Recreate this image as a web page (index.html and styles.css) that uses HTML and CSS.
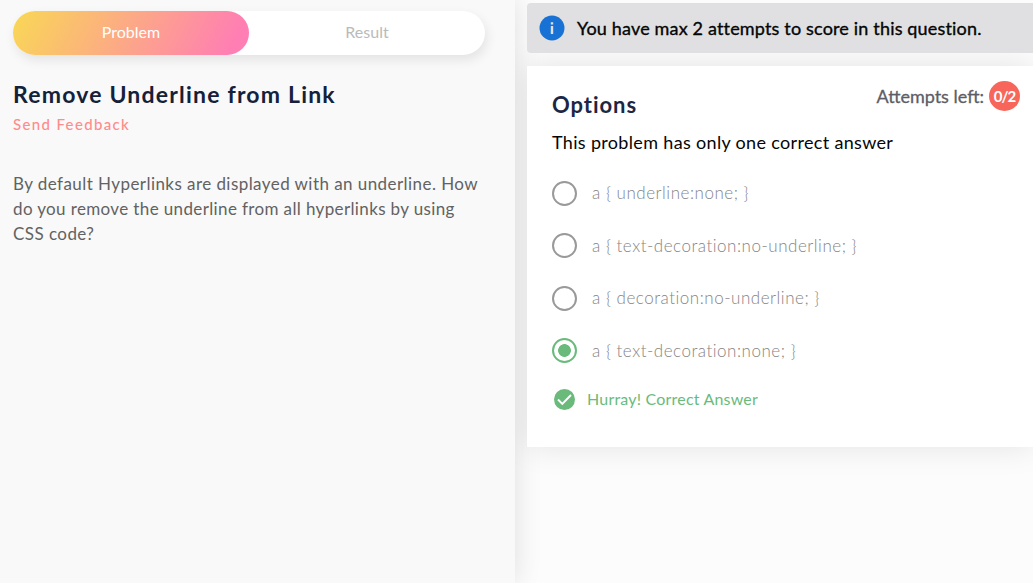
FILE: index.html
```html
<!DOCTYPE html>
<html lang="en">
<head>
<meta charset="utf-8">
<title>Remove Underline from Link</title>
<link rel="stylesheet" href="styles.css">
</head>
<body>
<div class="layout">
  <section class="problem">
    <nav class="tabs">
      <a class="tab tab-active">Problem</a>
      <a class="tab">Result</a>
    </nav>
    <h1 class="title">Remove Underline from Link</h1>
    <a class="feedback">Send Feedback</a>
    <p class="description">By default Hyperlinks are displayed with an underline. How<br><span class="line-tight">do you remove the underline from all hyperlinks by using</span><br>CSS code?</p>
  </section>
  <main class="answer">
    <div class="notice">
      <svg class="info" viewBox="0 0 26 26"><circle cx="13" cy="13" r="12.5" fill="#1871d4"/><path d="M11.8 7.2h2.4v2.2h-2.4zM11.8 11h2.4v8h-2.4z" fill="#e0e0e2"/></svg>
      <span class="notice-text">You have max 2 attempts to score in this question.</span>
    </div>
    <div class="card">
      <header class="card-head">
        <h2 class="options-title">Options</h2>
        <div class="attempts"><span class="attempts-label">Attempts left:</span><span class="badge">0/2</span></div>
      </header>
      <p class="hint">This problem has only one correct answer</p>
      <ul class="options">
        <li class="option"><span class="radio"></span><span class="option-text">a { underline:none; }</span></li>
        <li class="option"><span class="radio"></span><span class="option-text">a { text-decoration:no-underline; }</span></li>
        <li class="option"><span class="radio"></span><span class="option-text">a { decoration:no-underline; }</span></li>
        <li class="option"><span class="radio radio-checked"></span><span class="option-text">a { text-decoration:none; }</span></li>
      </ul>
      <div class="verdict">
        <svg class="tick" viewBox="0 0 21 21"><circle cx="10.5" cy="10.5" r="10.5" fill="#6abb7b"/><path d="M4 10.5l4.3 4.3L17 6" fill="none" stroke="#fff" stroke-width="1.9"/></svg>
        <span class="verdict-text">Hurray! Correct Answer</span>
      </div>
    </div>
  </main>
</div>
</body>
</html>
```
FILE: styles.css
```css
* { box-sizing: border-box; }
body, h1, h2, p, ul { margin: 0; padding: 0; }
body { font-family: Lato, "Open Sans", sans-serif; background: #fcfcfc; overflow: hidden; }
.layout { display: flex; height: 583px; }
.problem { width: 515px; padding: 11px 30px 0 13px; background: #f9f9f9; box-shadow: 0 0 26px rgba(0,0,0,.12); }
.tabs { display: flex; width: 472px; height: 44px; border-radius: 22px; background: #fff; box-shadow: 2px 5px 12px rgba(0,0,0,.09); }
.tab { flex: 1; border-radius: 22px; text-align: center; font-size: 16px; line-height: 42px; color: #bababa; }
.tab-active { color: #fff; background: linear-gradient(117deg, #f9d855 0%, #ff7eb3 92%); }
.title { margin-top: 24px; font-size: 23px; line-height: 30px; font-weight: 700; letter-spacing: 1.2px; color: #14213a; white-space: nowrap; }
.feedback { display: block; margin-top: 5px; font-size: 15px; line-height: 20px; letter-spacing: 1.35px; font-weight: 500; color: #ff8c8c; }
.description { margin-top: 37px; font-size: 17px; line-height: 25px; letter-spacing: .44px; color: #626262; white-space: nowrap; }
.line-tight { letter-spacing: .37px; }
.answer { flex: 1; padding: 3px 0 0 12px; min-width: 0; }
.notice { display: flex; align-items: center; gap: 12px; height: 50px; padding-left: 12px; border-radius: 4px 0 0 4px; background: #e0e0e2; position: relative; z-index: 2; }
.info { width: 26px; height: 26px; }
.notice-text { font-size: 18px; letter-spacing: .17px; color: #050505; -webkit-text-stroke: .35px #050505; white-space: nowrap; }
.card { height: 381px; margin-top: 13px; padding: 15px 13px 0 25px; background: #fff; box-shadow: 0 0 30px rgba(0,0,0,.1); }
.problem { position: relative; z-index: 1; }
.card { position: relative; z-index: 1; clip-path: inset(-40px -40px -40px -12px); }
.card-head { display: flex; justify-content: space-between; height: 46px; }
.options-title { padding-top: 9px; font-size: 22px; line-height: 30px; letter-spacing: .95px; color: #1c2746; }
.attempts { display: flex; gap: 5px; height: 30px; align-items: center; font-size: 18px; color: #5d5d66; -webkit-text-stroke: .3px #5d5d66; }
.attempts-label { padding-bottom: 1px; }
.badge { width: 31px; height: 30px; border-radius: 50%; background: #f8665b; color: #fff; font-size: 15px; letter-spacing: -.9px; line-height: 30px; text-align: center; font-weight: 700; -webkit-text-stroke: 0; }
.hint { height: 30px; font-size: 18px; letter-spacing: .33px; line-height: 30px; color: #050505; white-space: nowrap; }
.options { display: flex; flex-direction: column; list-style: none; margin-top: 10px; }
.option { display: flex; gap: 15px; align-items: center; height: 52.5px; font-size: 17px; font-weight: 300; letter-spacing: .52px; color: #858585; white-space: nowrap; }
.option-text { padding-bottom: 1.5px; }
.radio { width: 25px; height: 25px; border: 2px solid #999; border-radius: 50%; }
.radio-checked { border-color: #6abb7b; background: radial-gradient(circle, #6abb7b 6px, #fff 6.7px); }
.verdict { display: flex; gap: 12px; align-items: center; height: 30px; margin-top: 7px; padding-left: 2px; font-size: 16px; letter-spacing: .2px; color: #6abb7b; }
.verdict-text { padding-bottom: 2px; }
.tick { width: 21px; height: 21px; }
```
